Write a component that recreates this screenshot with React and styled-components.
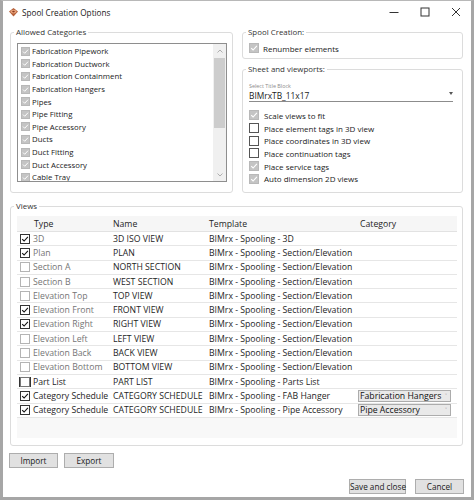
import React from "react";
import styled, { createGlobalStyle } from "styled-components";

const Global = createGlobalStyle`
  html, body { margin: 0; padding: 0; background: #fff; }
  body { font-family: "Open Sans", "Noto Sans", sans-serif; font-size: 7.8px; color: #1e1e1e; }
  * { box-sizing: border-box; }
`;

const Window = styled.div`
  width: 474px;
  height: 500px;
  display: flex;
  flex-direction: column;
  border: 3px solid #a6a6a6;
  border-top: 1px solid #b8b8b8;
  background: #fff;
`;

const TitleBar = styled.div`
  height: 22px;
  display: flex;
  align-items: center;
  padding-left: 5px;
`;

const TitleText = styled.span`
  margin-left: 3px;
  font-size: 8.2px;
  color: #1a1a1a;
`;

const Controls = styled.div`
  margin-left: auto;
  display: flex;
  height: 100%;
`;

const CtrlBtn = styled.div`
  width: 31px;
  height: 100%;
  display: flex;
  align-items: center;
  justify-content: center;
`;

const Body = styled.div`
  flex: 1;
  display: flex;
  flex-direction: column;
  padding: 4px 8px 3px 7px;
`;

const TopGrid = styled.div`
  display: grid;
  grid-template-columns: 223px 221px;
  column-gap: 9px;
`;

const RightCol = styled.div`
  display: flex;
  flex-direction: column;
  gap: 5px;
`;

const Group = styled.fieldset`
  margin: 0;
  min-width: 0;
  border: 1px solid #dcdcdc;
  border-radius: 3px;
  padding: ${(p) => p.$pad};
  margin-top: ${(p) => p.$mt || 0}px;
  flex: ${(p) => p.$flex || "none"};
  display: flex;
  flex-direction: column;
`;

const Legend = styled.legend`
  padding: 0 2px;
  margin-left: -3px;
  font-size: 7.9px;
  line-height: 10px;
  color: #333;
`;

const ListBox = styled.div`
  height: 139px;
  border: 1px solid #8e8e8e;
  display: flex;
  background: #fff;
`;

const ListItems = styled.div`
  flex: 1;
  padding-top: 1px;
  overflow: hidden;
`;

const ListItem = styled.div`
  height: 12.6px;
  display: flex;
  align-items: center;
  gap: 2px;
  padding-left: 3px;
  white-space: nowrap;
  color: #1a1a1a;
`;

const ScrollBar = styled.div`
  width: 13px;
  background: #f0f0f0;
  display: flex;
  flex-direction: column;
  align-items: center;
`;

const ScrollArrow = styled.div`
  height: 13px;
  width: 100%;
  display: flex;
  align-items: center;
  justify-content: center;
`;

const Thumb = styled.div`
  width: 11px;
  height: 70px;
  margin-top: 1px;
  background: #cdcdcd;
`;

const Spacer = styled.div`
  flex: 1;
`;

const boxStyles = {
  disabledChecked: { bg: "#c4c4c4", border: "#b8b8b8", check: "#fff" },
  disabledUnchecked: { bg: "#fff", border: "#b4b4b4", check: null },
  checked: { bg: "#fff", border: "#333", check: "#111" },
  unchecked: { bg: "#fff", border: "#555", check: null },
  focus: { bg: "#fff", border: "#777", check: null },
};

const Box = styled.span`
  flex: none;
  width: ${(p) => p.$size}px;
  height: ${(p) => p.$size}px;
  background: ${(p) => boxStyles[p.$v].bg};
  border: 1px solid ${(p) => boxStyles[p.$v].border};
  display: inline-flex;
  align-items: center;
  justify-content: center;
  outline: ${(p) => (p.$v === "focus" ? "1px solid #333" : "none")};
  outline-offset: 0px;
`;

const Check = ({ v, size = 10 }) => {
  const c = boxStyles[v].check;
  return (
    <Box $v={v} $size={size}>
      {c && (
        <svg width={size - 2} height={size - 2} viewBox="0 0 8 8">
          <path d="M1.2 4.1 L3.1 6 L6.9 1.9" fill="none" stroke={c} strokeWidth="1.1" />
        </svg>
      )}
    </Box>
  );
};

const OptionRow = styled.div`
  height: ${(p) => p.$h}px;
  display: flex;
  align-items: center;
  gap: ${(p) => p.$gap}px;
  font-size: 8px;
  color: #1a1a1a;
`;

const SelectField = styled.div`
  display: flex;
  align-items: flex-end;
  border-bottom: 1.5px solid #8c8c8c;
  margin-bottom: 7px;
`;

const SelectTexts = styled.div`
  flex: 1;
  display: flex;
  flex-direction: column;
`;

const SelectLabel = styled.span`
  font-size: 5.4px;
  line-height: 7px;
  color: #8a8a8a;
`;

const SelectValue = styled.span`
  font-size: 8.4px;
  line-height: 11px;
  color: #1a1a1a;
`;

const SelectArrow = styled.span`
  width: 0;
  height: 0;
  border-left: 2.5px solid transparent;
  border-right: 2.5px solid transparent;
  border-top: 3px solid #555;
  margin: 0 0 6px 0;
`;

const Table = styled.div`
  height: 222px;
  background: #f8f8f8;
  display: flex;
  flex-direction: column;
  font-size: 8.7px;
`;

const cols = "14px 81px 96px 149px 1fr";

const HeaderRow = styled.div`
  height: 16px;
  display: grid;
  grid-template-columns: ${cols};
  align-items: center;
  background: #f6f6f6;
  border-bottom: 1px solid #e2e2e2;
  color: #3a3a3a;
`;

const Row = styled.div`
  height: 14.3px;
  display: grid;
  grid-template-columns: ${cols};
  align-items: center;
  background: #fff;
  border-bottom: 1px solid #e6e6e6;
  white-space: nowrap;
`;

const Cell = styled.div`
  padding-left: ${(p) => p.$pl ?? 1}px;
  color: ${(p) => (p.$dim ? "#757575" : "#1e1e1e")};
  overflow: hidden;
  display: flex;
  align-items: center;
`;

const Combo = styled.div`
  width: 93px;
  height: 12.5px;
  margin-left: 1px;
  border: 1px solid #acacac;
  background: #e9e9e9;
  display: flex;
  align-items: center;
  justify-content: space-between;
  padding: 0 3px 0 1px;
  color: #111;
`;

const ComboArrow = styled.span`
  font-size: 6px;
  color: #888;
`;

const ButtonRow = styled.div`
  display: flex;
  gap: ${(p) => p.$gap}px;
  justify-content: ${(p) => p.$justify || "flex-start"};
  margin: ${(p) => p.$m};
`;

const Button = styled.button`
  width: ${(p) => p.$w}px;
  height: 15px;
  padding: 0;
  background: #e1e1e1;
  border: 1px solid #adadad;
  font-family: inherit;
  font-size: 8.2px;
  color: #1a1a1a;
  white-space: nowrap;
`;

const categories = [
  "Fabrication Pipework",
  "Fabrication Ductwork",
  "Fabrication Containment",
  "Fabrication Hangers",
  "Pipes",
  "Pipe Fitting",
  "Pipe Accessory",
  "Ducts",
  "Duct Fitting",
  "Duct Accessory",
  "Cable Tray",
];

const sheetOptions = [
  ["Scale views to fit", "disabledChecked"],
  ["Place element tags in 3D view", "unchecked"],
  ["Place coordinates in 3D view", "unchecked"],
  ["Place continuation tags", "unchecked"],
  ["Place service tags", "disabledChecked"],
  ["Auto dimension 2D views", "disabledChecked"],
];

const SEC = "BIMrx - Spooling - Section/Elevation";
const views = [
  { cb: "checked", type: "3D", name: "3D ISO VIEW", tpl: "BIMrx - Spooling - 3D", dim: true },
  { cb: "checked", type: "Plan", name: "PLAN", tpl: SEC, dim: true },
  { cb: "disabledUnchecked", type: "Section A", name: "NORTH SECTION", tpl: SEC, dim: true },
  { cb: "disabledUnchecked", type: "Section B", name: "WEST SECTION", tpl: SEC, dim: true },
  { cb: "disabledUnchecked", type: "Elevation Top", name: "TOP VIEW", tpl: SEC, dim: true },
  { cb: "checked", type: "Elevation Front", name: "FRONT VIEW", tpl: SEC, dim: true },
  { cb: "checked", type: "Elevation Right", name: "RIGHT VIEW", tpl: SEC, dim: true },
  { cb: "disabledUnchecked", type: "Elevation Left", name: "LEFT VIEW", tpl: SEC, dim: true },
  { cb: "disabledUnchecked", type: "Elevation Back", name: "BACK VIEW", tpl: SEC, dim: true },
  { cb: "disabledUnchecked", type: "Elevation Bottom", name: "BOTTOM VIEW", tpl: SEC, dim: true },
  { cb: "focus", type: "Part List", name: "PART LIST", tpl: "BIMrx - Spooling - Parts List" },
  { cb: "checked", type: "Category Schedule", name: "CATEGORY SCHEDULE", tpl: "BIMrx - Spooling - FAB Hanger", cat: "Fabrication Hangers" },
  { cb: "checked", type: "Category Schedule", name: "CATEGORY SCHEDULE", tpl: "BIMrx - Spooling - Pipe Accessory", cat: "Pipe Accessory" },
];

const AppIcon = () => (
  <svg width="11" height="11" viewBox="0 0 11 11">
    <path d="M5.5 1 L10 4.5 L5.5 9.5 L1 4.5 Z" fill="#b5603a" />
    <ellipse cx="5.5" cy="4.6" rx="3" ry="1.8" fill="#e8a27a" />
    <ellipse cx="5.5" cy="4.6" rx="1.3" ry="0.8" fill="#8a3b20" />
  </svg>
);

export default function App() {
  return (
    <>
      <Global />
      <Window>
        <TitleBar>
          <AppIcon />
          <TitleText>Spool Creation Options</TitleText>
          <Controls>
            <CtrlBtn>
              <svg width="10" height="10" viewBox="0 0 10 10">
                <path d="M0.5 5.5 H9.5" stroke="#333" strokeWidth="1" />
              </svg>
            </CtrlBtn>
            <CtrlBtn>
              <svg width="10" height="10" viewBox="0 0 10 10">
                <rect x="1" y="1" width="8" height="8" fill="none" stroke="#333" strokeWidth="1" />
              </svg>
            </CtrlBtn>
            <CtrlBtn>
              <svg width="10" height="10" viewBox="0 0 10 10">
                <path d="M1 1 L9 9 M9 1 L1 9" stroke="#333" strokeWidth="1" />
              </svg>
            </CtrlBtn>
          </Controls>
        </TitleBar>
        <Body>
          <TopGrid>
            <Group $pad="6px 5px 10px 6px">
              <Legend>Allowed Categories</Legend>
              <ListBox>
                <ListItems>
                  {categories.map((c) => (
                    <ListItem key={c}>
                      <Check v="disabledChecked" size={9} />
                      <span>{c}</span>
                    </ListItem>
                  ))}
                </ListItems>
                <ScrollBar>
                  <ScrollArrow>
                    <svg width="6" height="4" viewBox="0 0 6 4">
                      <path d="M0.5 3.5 L3 1 L5.5 3.5" fill="none" stroke="#a6a6a6" strokeWidth="0.9" />
                    </svg>
                  </ScrollArrow>
                  <Thumb />
                  <Spacer />
                  <ScrollArrow>
                    <svg width="6" height="4" viewBox="0 0 6 4">
                      <path d="M0.5 0.5 L3 3 L5.5 0.5" fill="none" stroke="#a6a6a6" strokeWidth="0.9" />
                    </svg>
                  </ScrollArrow>
                </ScrollBar>
              </ListBox>
            </Group>
            <RightCol>
              <Group $pad="5px 6px 4px 6px">
                <Legend>Spool Creation:</Legend>
                <OptionRow $h={12} $gap={4}>
                  <Check v="disabledChecked" />
                  <span>Renumber elements</span>
                </OptionRow>
              </Group>
              <Group $pad="9px 9px 6px 6px" $flex="1">
                <Legend>Sheet and viewports:</Legend>
                <SelectField>
                  <SelectTexts>
                    <SelectLabel>Select Title Block</SelectLabel>
                    <SelectValue>BIMrxTB_11x17</SelectValue>
                  </SelectTexts>
                  <SelectArrow />
                </SelectField>
                {sheetOptions.map(([label, v]) => (
                  <OptionRow key={label} $h={12.7} $gap={5}>
                    <Check v={v} />
                    <span>{label}</span>
                  </OptionRow>
                ))}
              </Group>
            </RightCol>
          </TopGrid>
          <Group $pad="5px 5px 7px 6px" $mt={8}>
            <Legend>Views</Legend>
            <Table>
              <HeaderRow>
                <Cell />
                <Cell $pl={3}>Type</Cell>
                <Cell>Name</Cell>
                <Cell>Template</Cell>
                <Cell $pl={3}>Category</Cell>
              </HeaderRow>
              {views.map((r, i) => (
                <Row key={i}>
                  <Cell $pl={3}>
                    <Check v={r.cb} />
                  </Cell>
                  <Cell $pl={2} $dim={r.dim}>{r.type}</Cell>
                  <Cell>{r.name}</Cell>
                  <Cell>{r.tpl}</Cell>
                  <Cell $pl={0}>
                    {r.cat && (
                      <Combo>
                        <span>{r.cat}</span>
                        <ComboArrow>˅</ComboArrow>
                      </Combo>
                    )}
                  </Cell>
                </Row>
              ))}
            </Table>
          </Group>
          <ButtonRow $gap={6} $m="7px 0 0 -1px">
            <Button $w={49}>Import</Button>
            <Button $w={50}>Export</Button>
          </ButtonRow>
          <ButtonRow $gap={9} $justify="flex-end" $m="11px -1px 0 0">
            <Button $w={57}>Save and close</Button>
            <Button $w={49}>Cancel</Button>
          </ButtonRow>
        </Body>
      </Window>
    </>
  );
}
